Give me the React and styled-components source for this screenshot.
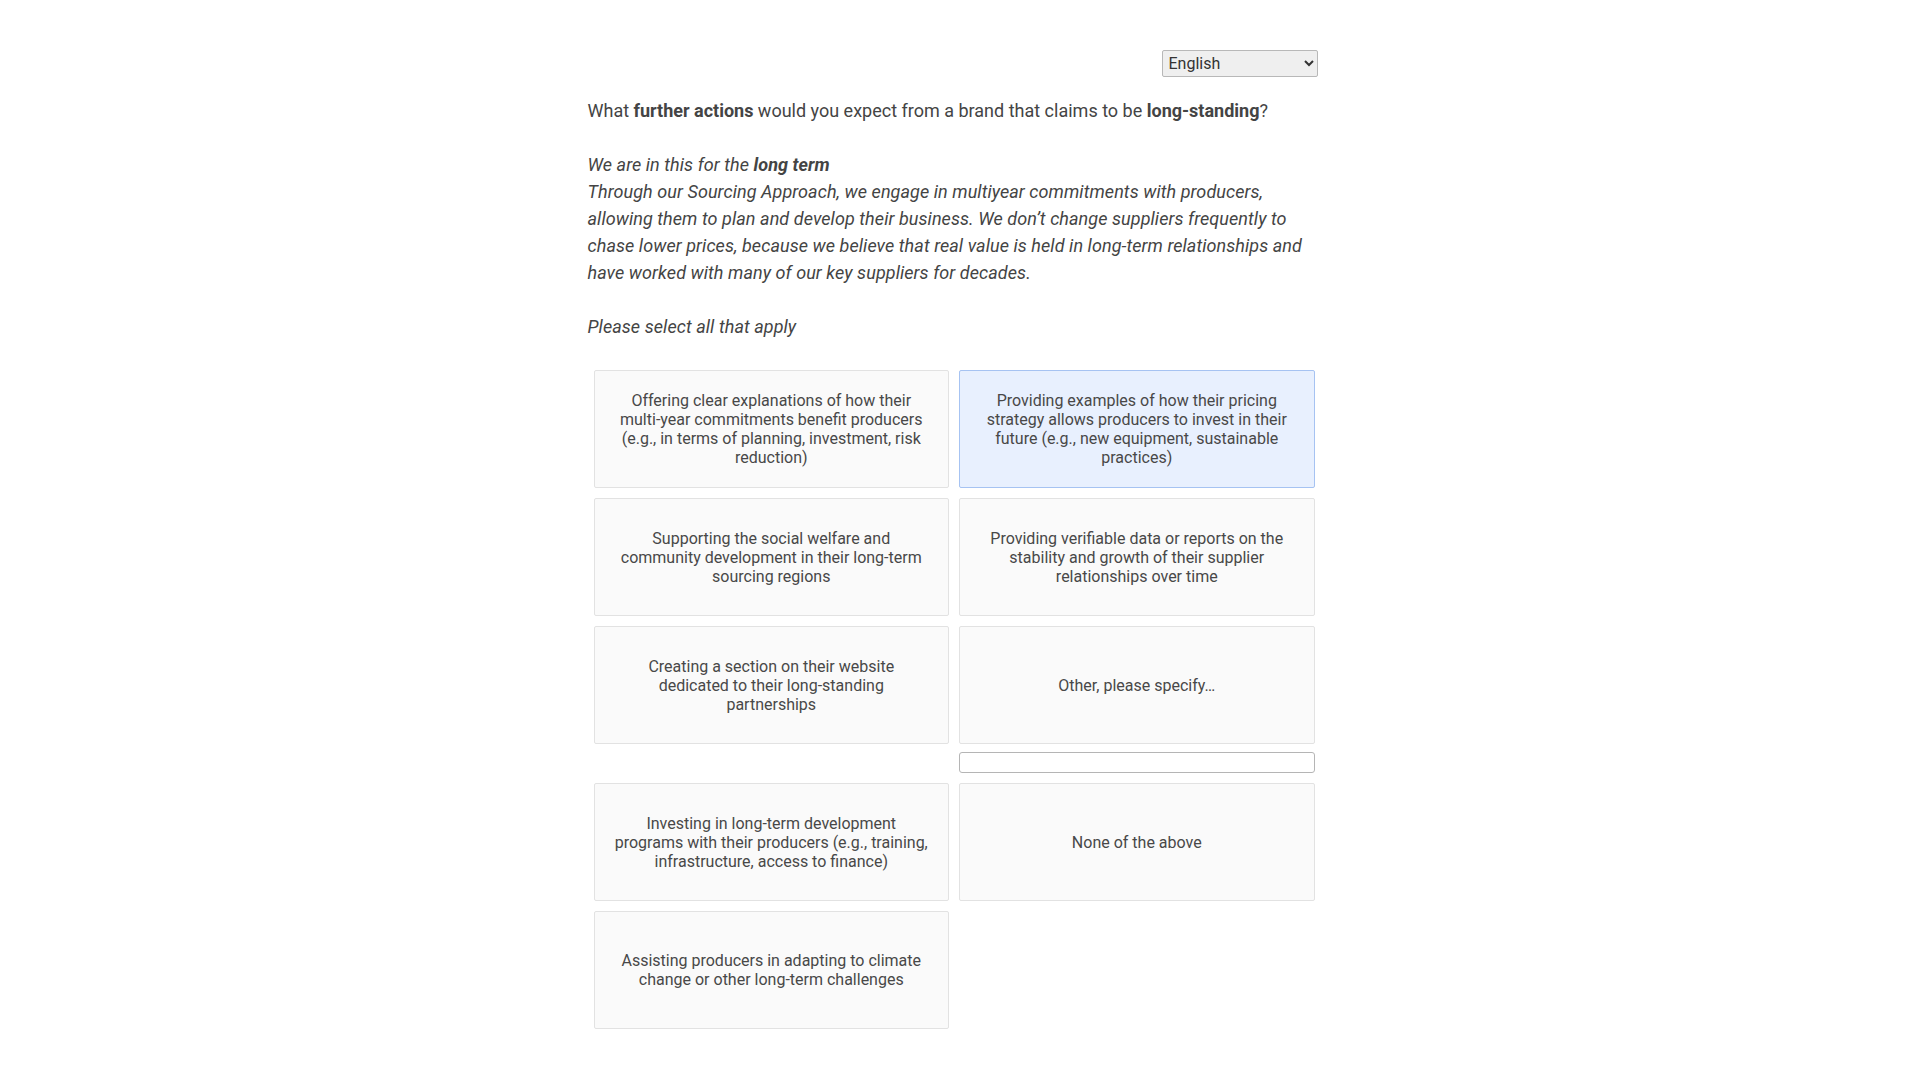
import React, { useState } from 'react'
import styled, { createGlobalStyle } from 'styled-components'

const GlobalStyle = createGlobalStyle`
  html, body {
    margin: 0;
    padding: 0;
    background: #ffffff;
  }
  body {
    font-family: Roboto, "Liberation Sans", Arial, sans-serif;
    color: #444444;
    padding-right: 15px;
  }
`

const Page = styled.div`
  width: 730px;
  margin: 0 auto;
  padding: 50px 0 242px;
`

const Toolbar = styled.div`
  display: flex;
  justify-content: flex-end;
`

const LanguageSelect = styled.select`
  width: 156px;
  height: 27px;
  font-family: Roboto, "Liberation Sans", Arial, sans-serif;
  font-size: 16px;
  color: #333333;
  background: #efefef;
  border: 1px solid #b8b8b8;
  border-radius: 2px;
  padding: 0 2px;
`

const Question = styled.div`
  margin-top: 20px;
  font-size: 18px;
  line-height: 27px;
  color: #444444;

  b {
    font-weight: 700;
  }
`

const Intro = styled.span`
  font-style: italic;
  letter-spacing: 0.07px;
`

const Options = styled.div`
  display: grid;
  grid-template-columns: 1fr 1fr;
  gap: 10px;
  align-items: start;
  padding: 0 3px 0 6px;
  margin-top: 30px;
`

const Cell = styled.div`
  display: flex;
  flex-direction: column;
`

const Card = styled.div`
  box-sizing: border-box;
  min-height: 118px;
  display: flex;
  align-items: center;
  justify-content: center;
  text-align: center;
  padding: 10px 18px;
  font-size: 16px;
  line-height: 19px;
  color: #484848;
  background: ${p => (p.$selected ? '#e8f0fe' : '#fafafa')};
  border: 1px solid ${p => (p.$selected ? '#a6c3f2' : '#e2e2e2')};
  border-radius: 2px;
  cursor: pointer;
`

const OtherInput = styled.input`
  box-sizing: border-box;
  margin-top: 8px;
  height: 21px;
  width: 100%;
  border: 1px solid #b5b5b5;
  border-radius: 3px;
  background: #ffffff;
  font-family: Roboto, "Liberation Sans", Arial, sans-serif;
  font-size: 14px;
  padding: 0 4px;
`

const options = [
  { id: 1, label: 'Offering clear explanations of how their multi-year commitments benefit producers (e.g., in terms of planning, investment, risk reduction)' },
  { id: 2, label: 'Providing examples of how their pricing strategy allows producers to invest in their future (e.g., new equipment, sustainable practices)' },
  { id: 3, label: 'Supporting the social welfare and community development in their long-term sourcing regions' },
  { id: 4, label: 'Providing verifiable data or reports on the stability and growth of their supplier relationships over time' },
  { id: 5, label: 'Creating a section on their website dedicated to their long-standing partnerships' },
  { id: 6, label: 'Other, please specify…', other: true },
  { id: 7, label: 'Investing in long-term development programs with their producers (e.g., training, infrastructure, access to finance)' },
  { id: 8, label: 'None of the above' },
  { id: 9, label: 'Assisting producers in adapting to climate change or other long-term challenges' },
]

export default function App() {
  const [selected, setSelected] = useState([2])

  const toggle = id =>
    setSelected(s => (s.includes(id) ? s.filter(x => x !== id) : [...s, id]))

  return (
    <>
      <GlobalStyle />
      <Page>
        <Toolbar>
          <LanguageSelect defaultValue="en">
            <option value="en">English</option>
          </LanguageSelect>
        </Toolbar>
        <Question>
          What <b>further actions</b> would you expect from a brand that claims to be <b>long-standing</b>?
          <br />
          <br />
          <Intro>
            We are in this for the <b>long term</b>
            <br />
            Through our Sourcing Approach, we engage in multiyear commitments with producers,
            allowing them to plan and develop their business. We don’t change suppliers frequently to
            chase lower prices, because we believe that real value is held in long-term relationships and
            have worked with many of our key suppliers for decades.
            <br />
            <br />
            Please select all that apply
          </Intro>
        </Question>
        <Options>
          {options.map(o => (
            <Cell key={o.id}>
              <Card $selected={selected.includes(o.id)} onClick={() => toggle(o.id)}>
                {o.label}
              </Card>
              {o.other && <OtherInput type="text" />}
            </Cell>
          ))}
        </Options>
      </Page>
    </>
  )
}
